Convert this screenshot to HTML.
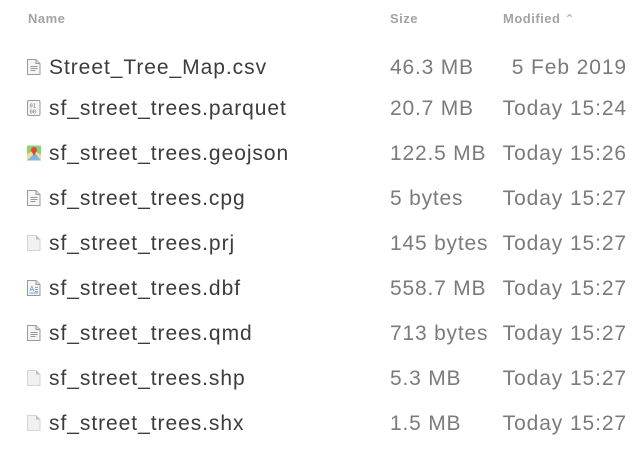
<!DOCTYPE html>
<html><head><meta charset="utf-8"><style>
html,body{margin:0;padding:0;background:#fff;width:636px;height:452px;overflow:hidden;font-family:"Liberation Sans","DejaVu Sans",sans-serif;}
.h{position:absolute;top:11px;font-size:13px;font-weight:bold;color:#a3a3a3;letter-spacing:0.5px}
.row{position:absolute;left:0;width:636px;height:30px}
.ic{position:absolute;left:26px;top:6px}
.n{position:absolute;left:49px;top:4px;font-size:21px;color:#3c3c3c;letter-spacing:0.95px;white-space:nowrap}
.s{position:absolute;left:390px;top:4px;font-size:21px;color:#7b7b7b;letter-spacing:0.8px;white-space:nowrap}
.m{position:absolute;right:9px;top:4px;font-size:21px;color:#7b7b7b;letter-spacing:0.9px;white-space:nowrap}
</style></head><body>
<div class="h" style="left:28px">Name</div>
<div class="h" style="left:390px">Size</div>
<div class="h" style="left:503px">Modified <span style="font-weight:normal;font-size:12px">&#8963;</span></div>

<div class="row" style="top:52px"><svg class="ic" width="16" height="18" viewBox="0 0 16 18"><path d="M1.5 1.5h8.5l4 4v11h-12.5z" fill="#f4f4f2" stroke="#9a9a9a"/><path d="M10 1.5v4h4" fill="#ddd" stroke="#9a9a9a"/><path d="M4.5 8.5h7M4.5 10.5h7M4.5 12.5h5" stroke="#999"/></svg><div class="n">Street_Tree_Map.csv</div><div class="s">46.3 MB</div><div class="m">5 Feb 2019</div></div>

<div class="row" style="top:93px"><svg class="ic" width="16" height="18" viewBox="0 0 16 18"><rect x="1.5" y="1.5" width="12.5" height="15" rx="1.5" fill="#f4f4f2" stroke="#9a9a9a"/><text x="3.5" y="8.5" font-size="5.5" fill="#777" font-family="DejaVu Sans Mono">01</text><text x="3.5" y="14.5" font-size="5.5" fill="#777" font-family="DejaVu Sans Mono">00</text></svg><div class="n">sf_street_trees.parquet</div><div class="s">20.7 MB</div><div class="m">Today 15:24</div></div>

<div class="row" style="top:138px"><svg class="ic" width="16" height="18" viewBox="0 0 16 18"><rect x="1" y="1.5" width="14" height="15" rx="1" fill="#8fce7a"/><path d="M1 10l7-3.5 7 4.5v5.5H1z" fill="#f2e08a"/><path d="M1 16.5L9 9l6 7.5z" fill="#7fb5e8"/><circle cx="8" cy="6" r="3" fill="#e2463b"/><path d="M5.5 7l2.5 5 2.5-5z" fill="#e2463b"/></svg><div class="n">sf_street_trees.geojson</div><div class="s">122.5 MB</div><div class="m">Today 15:26</div></div>

<div class="row" style="top:183px"><svg class="ic" width="16" height="18" viewBox="0 0 16 18"><path d="M1.5 1.5h8.5l4 4v11h-12.5z" fill="#f4f4f2" stroke="#9a9a9a"/><path d="M10 1.5v4h4" fill="#ddd" stroke="#9a9a9a"/><path d="M4.5 8.5h7M4.5 10.5h7M4.5 12.5h5" stroke="#999"/></svg><div class="n">sf_street_trees.cpg</div><div class="s">5 bytes</div><div class="m">Today 15:27</div></div>

<div class="row" style="top:228px"><svg class="ic" width="16" height="18" viewBox="0 0 16 18"><path d="M1.5 1.5h8.5l4 4v11h-12.5z" fill="#f1f1ef" stroke="#d3d3d3"/><path d="M10 1.5v4h4z" fill="#bdbdbd"/></svg><div class="n">sf_street_trees.prj</div><div class="s">145 bytes</div><div class="m">Today 15:27</div></div>

<div class="row" style="top:273px"><svg class="ic" width="16" height="18" viewBox="0 0 16 18"><path d="M1.5 1.5h8.5l4 4v11h-12.5z" fill="#f4f4f2" stroke="#9a9a9a"/><path d="M10 1.5v4h4" fill="#ddd" stroke="#9a9a9a"/><text x="3.5" y="12" font-size="7" fill="#4a8fd8" font-family="Liberation Sans">A</text><path d="M9 8.5h3M9 10.5h3M9 12.5h3M3.5 14h8.5" stroke="#7aa8dd"/></svg><div class="n">sf_street_trees.dbf</div><div class="s">558.7 MB</div><div class="m">Today 15:27</div></div>

<div class="row" style="top:318px"><svg class="ic" width="16" height="18" viewBox="0 0 16 18"><path d="M1.5 1.5h8.5l4 4v11h-12.5z" fill="#f4f4f2" stroke="#9a9a9a"/><path d="M10 1.5v4h4" fill="#ddd" stroke="#9a9a9a"/><path d="M4.5 8.5h7M4.5 10.5h7M4.5 12.5h5" stroke="#999"/></svg><div class="n">sf_street_trees.qmd</div><div class="s">713 bytes</div><div class="m">Today 15:27</div></div>

<div class="row" style="top:363px"><svg class="ic" width="16" height="18" viewBox="0 0 16 18"><path d="M1.5 1.5h8.5l4 4v11h-12.5z" fill="#f1f1ef" stroke="#d3d3d3"/><path d="M10 1.5v4h4z" fill="#bdbdbd"/></svg><div class="n">sf_street_trees.shp</div><div class="s">5.3 MB</div><div class="m">Today 15:27</div></div>

<div class="row" style="top:408px"><svg class="ic" width="16" height="18" viewBox="0 0 16 18"><path d="M1.5 1.5h8.5l4 4v11h-12.5z" fill="#f1f1ef" stroke="#d3d3d3"/><path d="M10 1.5v4h4z" fill="#bdbdbd"/></svg><div class="n">sf_street_trees.shx</div><div class="s">1.5 MB</div><div class="m">Today 15:27</div></div>
</body></html>
